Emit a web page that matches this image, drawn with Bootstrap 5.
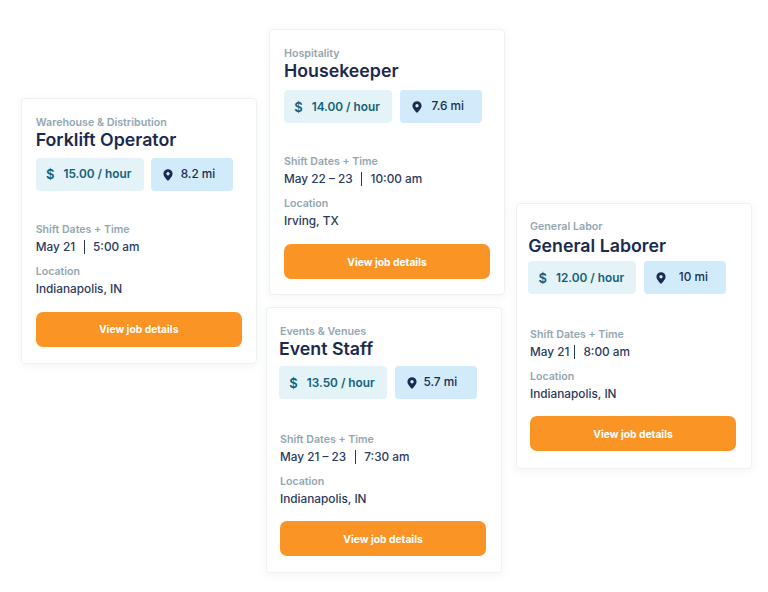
<!DOCTYPE html>
<html lang="en">
<head>
  <meta charset="UTF-8" />
  <title>Job cards</title>
  <link rel="stylesheet" href="https://cdn.jsdelivr.net/npm/bootstrap@5.3.0/dist/css/bootstrap.min.css" />
  <style>
    body {
      background: #fff;
      font-family: "Inter", "Liberation Sans", sans-serif;
      color: #1f2d50;
    }
    .board {
      position: relative;
      width: 768px;
      height: 592px;
      overflow: hidden;
    }
    .job-card {
      position: absolute;
      width: 235.500px;
      height: 266px;
      padding: 17px 0 0 var(--pad);
      background: #fff;
      border: 1px solid #eef1f3;
      border-radius: 4px;
      box-shadow: 0 2px 10px rgba(40, 60, 80, .06);
    }
    /* the cards sit slightly differently from each other in the picture */
    .job-a { left: 21px; top: 97.500px; --pad: 13.700px; --title-x: 0px; --title-top: -2px; --title-bottom: 6px; --first: 31px; --btn: 14px; --dist-gap: 7.500px; }
    .job-b { left: 269px; top: 29px; --pad: 14px; --title-x: 0px; --title-top: -2px; --title-bottom: 7px; --first: 31px; --btn: 14px; --dist-gap: 10px; }
    .job-c { left: 266px; top: 307px; --pad: 13px; --title-x: -1px; --title-top: -2px; --title-bottom: 5px; --first: 33px; --btn: 13px; --dist-gap: 7px; }
    .job-d { left: 516px; top: 203px; padding-top: 16px; --pad: 13px; --title-x: -1.700px; --title-top: 0px; --title-bottom: 3px; --first: 33px; --btn: 13px; --dist-gap: 13px; }
    .job-cat {
      font-size: 10.700px;
      line-height: 14px;
      font-weight: 600;
      color: #93a7b1;
    }
    .job-title {
      margin: var(--title-top) 0 var(--title-bottom) var(--title-x);
      font-size: 17.750px;
      line-height: 24px;
      font-weight: 600;
      color: #1b2a4e;
    }
    .stats {
      gap: 7.500px;
      margin-left: var(--title-x);
    }
    .stat {
      height: 33px;
      border-radius: 4px;
      font-size: 11.800px;
      font-weight: 600;
    }
    .stat-pay { width: 108px; padding: 2px 2px 0 0; background: #e3f3f7; color: #12607c; gap: 9px; }
    .stat-dist { width: 82px; padding: 1px 0 0 12px; background: #d1ebfb; color: #1b2a4e; font-weight: 500; gap: var(--dist-gap); }
    .stat-sign { font-size: 13px; }
    .field-label {
      margin-top: 8px;
      font-size: 10.600px;
      line-height: 16px;
      font-weight: 600;
      color: #93a7b1;
    }
    .field-value {
      font-size: 11.800px;
      line-height: 18px;
      font-weight: 500;
      color: #2a3a5e;
    }
    .first-field { margin-top: var(--first); }
    .bar { display: inline-block; width: 1px; height: 14px; margin: 0 8.500px; background: #2a3a5e; vertical-align: -3px; }
    .job-d .bar { margin: 0 8.500px 0 4.500px; }
    .view-btn {
      display: block;
      width: 206px;
      height: 35px;
      margin-top: var(--btn);
      padding: 2px 0 0;
      border: 0;
      border-radius: 7px;
      background: #fa9425;
      color: #fff;
      font-size: 10.300px;
      font-weight: 700;
    }
    .view-btn:hover { background: #fa9425; color: #fff; }
  </style>
</head>
<body class="m-0">
  <svg width="0" height="0" class="d-block">
    <symbol id="pin" viewBox="0 0 12 14">
      <path fill="#1b2a4e" fill-rule="evenodd" d="M6 0a5.500 5.500 0 0 0-5.500 5.500C.5 9.200 6 14 6 14s5.500-4.800 5.500-8.500A5.500 5.500 0 0 0 6 0zm0 3.500a2 2 0 1 1 0 4 2 2 0 0 1 0-4z" />
    </symbol>
  </svg>
  <div class="board" id="board"></div>

  <script src="https://cdn.jsdelivr.net/npm/bootstrap@5.3.0/dist/js/bootstrap.bundle.min.js"></script>
  <script>
    const jobs = [
      { cls: "job-a", cat: "Warehouse & Distribution", title: "Forklift Operator", pay: "15.00 / hour", dist: "8.2 mi", date: "May 21", time: "5:00 am", loc: "Indianapolis, IN" },
      { cls: "job-b", cat: "Hospitality", title: "Housekeeper", pay: "14.00 / hour", dist: "7.6 mi", date: "May 22 – 23", time: "10:00 am", loc: "Irving, TX" },
      { cls: "job-c", cat: "Events & Venues", title: "Event Staff", pay: "13.50 / hour", dist: "5.7 mi", date: "May 21 – 23", time: "7:30 am", loc: "Indianapolis, IN" },
      { cls: "job-d", cat: "General Labor", title: "General Laborer", pay: "12.00 / hour", dist: "10 mi", date: "May 21", time: "8:00 am", loc: "Indianapolis, IN" }
    ];

    document.getElementById("board").innerHTML = jobs.map((job) => `
      <div class="job-card ${job.cls}">
        <div class="job-cat">${job.cat.replace("&", "&amp;")}</div>
        <h2 class="job-title">${job.title}</h2>
        <div class="stats d-flex">
          <div class="stat stat-pay d-flex align-items-center justify-content-center"><span class="stat-sign">$</span><span>${job.pay}</span></div>
          <div class="stat stat-dist d-flex align-items-center"><svg width="10" height="12"><use href="#pin" /></svg><span>${job.dist}</span></div>
        </div>
        <div class="field-label first-field">Shift Dates + Time</div>
        <div class="field-value">${job.date}<span class="bar"></span>${job.time}</div>
        <div class="field-label">Location</div>
        <div class="field-value">${job.loc}</div>
        <button type="button" class="btn view-btn">View job details</button>
      </div>`).join("");
  </script>
</body>
</html>
